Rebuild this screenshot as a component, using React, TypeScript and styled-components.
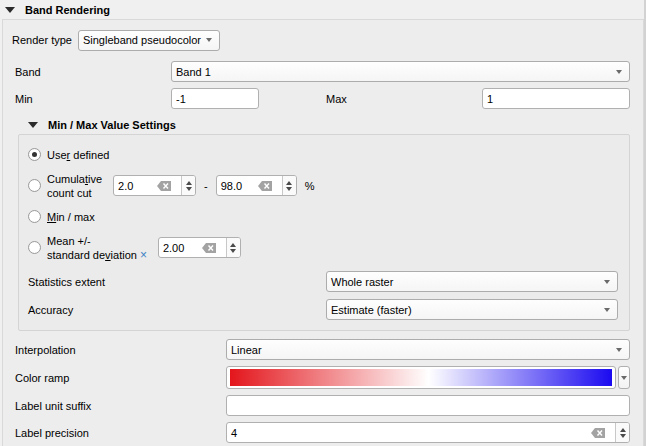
import React from 'react';
import styled, { createGlobalStyle } from 'styled-components';

const GlobalStyle = createGlobalStyle`
  html, body {
    margin: 0;
    padding: 0;
    background: #f0f0f0;
  }
  body {
    font-family: "Liberation Sans", Arial, sans-serif;
    font-size: 11px;
    color: #000;
  }
`;

const Page = styled.div`
  width: 646px;
  height: 446px;
  box-sizing: border-box;
  overflow: hidden;
  background: #f0f0f0;
  display: flex;
  flex-direction: column;
  border-right: 2px solid #d2d2d2;
`;

const SectionHeader = styled.div<{ $indent?: number; $height?: number; $top?: number }>`
  height: ${p => p.$height ?? 19}px;
  box-sizing: border-box;
  display: flex;
  align-items: center;
  gap: 10px;
  padding-left: ${p => p.$indent ?? 5}px;
  padding-top: ${p => p.$top ?? 0}px;
  font-weight: bold;
  flex-shrink: 0;
`;

const Caret = styled.span`
  width: 0;
  height: 0;
  border-left: 5px solid transparent;
  border-right: 5px solid transparent;
  border-top: 6px solid #2b2b2b;
`;

const Frame = styled.div`
  flex: 1;
  margin-left: 2px;
  border: 1px solid #d9d9d9;
  border-bottom: none;
  background: #ededed;
  padding: 9px 13px 0 9px;
  display: flex;
  flex-direction: column;
`;

const InlineRow = styled.div`
  display: flex;
  align-items: center;
  gap: 6px;
  height: 22px;
`;

const Grid = styled.div<{ $cols: string; $rowGap: number; $top: number; $left: number }>`
  display: grid;
  grid-template-columns: ${p => p.$cols};
  column-gap: 6px;
  row-gap: ${p => p.$rowGap}px;
  margin-top: ${p => p.$top}px;
  margin-left: ${p => p.$left}px;
  align-items: center;
`;

const Label = styled.span<{ $col?: number }>`
  ${p => (p.$col ? `grid-column: ${p.$col};` : '')}
  white-space: nowrap;
`;

const Combo = styled.div<{ $width?: number; $span?: string }>`
  ${p => (p.$span ? `grid-column: ${p.$span};` : '')}
  width: ${p => (p.$width ? `${p.$width}px` : 'auto')};
  height: 21px;
  box-sizing: border-box;
  border: 1px solid #acacac;
  border-radius: 3px;
  background: linear-gradient(#fefefe, #f5f5f5);
  display: flex;
  align-items: center;
  justify-content: space-between;
  padding: 0 7px 0 4px;
  white-space: nowrap;
`;

const Arrow = styled.span`
  width: 0;
  height: 0;
  border-left: 3.5px solid transparent;
  border-right: 3.5px solid transparent;
  border-top: 4px solid #6a6a6a;
`;

const LineEdit = styled.div<{ $col?: number }>`
  ${p => (p.$col ? `grid-column: ${p.$col};` : '')}
  height: 21px;
  box-sizing: border-box;
  border: 1px solid #b0b0b0;
  border-radius: 3px;
  background: #fff;
  display: flex;
  align-items: center;
  padding: 0 4px;
`;

const Spin = styled.div<{ $width?: number }>`
  width: ${p => (p.$width ? `${p.$width}px` : 'auto')};
  height: 21px;
  box-sizing: border-box;
  border: 1px solid #b0b0b0;
  border-radius: 3px;
  background: #fff;
  display: flex;
  align-items: stretch;
  flex-shrink: 0;
`;

const SpinValue = styled.span`
  flex: 1;
  display: flex;
  align-items: center;
  padding-left: 4px;
`;

const ClearSlot = styled.span`
  display: flex;
  align-items: center;
  margin-right: 10px;
`;

const SpinButtons = styled.span`
  width: 13px;
  border-left: 1px solid #c8c8c8;
  background: #fafafa;
  display: flex;
  flex-direction: column;
  align-items: center;
  justify-content: center;
  gap: 2px;
  border-radius: 0 2px 2px 0;
`;

const TriUp = styled.span`
  width: 0;
  height: 0;
  border-left: 3.5px solid transparent;
  border-right: 3.5px solid transparent;
  border-bottom: 4px solid #4a4a4a;
`;

const TriDown = styled(TriUp)`
  border-bottom: none;
  border-top: 4px solid #4a4a4a;
`;

const ClearIcon = () => (
  <svg width="14" height="10" viewBox="0 0 14 10">
    <path d="M4 0 H14 V10 H4 L0 5 Z" fill="#a3a3a3" />
    <path d="M6.5 2.5 L11 7.5 M11 2.5 L6.5 7.5" stroke="#fff" strokeWidth="1.4" />
  </svg>
);

const SpinBox: React.FC<{ value: string; width?: number }> = ({ value, width }) => (
  <Spin $width={width}>
    <SpinValue>{value}</SpinValue>
    <ClearSlot>
      <ClearIcon />
    </ClearSlot>
    <SpinButtons>
      <TriUp />
      <TriDown />
    </SpinButtons>
  </Spin>
);

const ComboBox: React.FC<{ text: string; width?: number; span?: string }> = ({ text, width, span }) => (
  <Combo $width={width} $span={span}>
    <span>{text}</span>
    <Arrow />
  </Combo>
);

const GroupBox = styled.div`
  margin: 0 0 0 6px;
  border: 1px solid #d4d4d4;
  border-radius: 2px;
  background: #ebebeb;
  padding: 9px 11px 10px 9px;
  display: flex;
  flex-direction: column;
  gap: 10px;
`;

const RadioRow = styled.div<{ $height?: number }>`
  display: flex;
  align-items: center;
  height: ${p => p.$height ?? 21}px;
`;

const Radio = styled.span<{ $checked?: boolean }>`
  width: 13px;
  height: 13px;
  box-sizing: border-box;
  border-radius: 50%;
  border: 1px solid #9a9a9a;
  background: radial-gradient(circle, #ffffff 55%, #f1f1f1);
  display: flex;
  align-items: center;
  justify-content: center;
  margin-right: 6px;
  flex-shrink: 0;
  &::after {
    content: '';
    display: ${p => (p.$checked ? 'block' : 'none')};
    width: 5px;
    height: 5px;
    border-radius: 50%;
    background: #333;
  }
`;

const RadioText = styled.span`
  line-height: 14px;
  margin-right: 11px;
`;

const Mark = styled.span`
  color: #3d80c4;
  font-size: 12px;
  margin-left: 3px;
`;

const Sep = styled.span`
  margin: 0 8px 0 8px;
`;

const RampWrap = styled.div`
  display: flex;
  gap: 2px;
  height: 23px;
`;

const Ramp = styled.div`
  flex: 1;
  box-sizing: border-box;
  border: 1px solid #b0b0b0;
  border-radius: 3px;
  background: #fff;
  padding: 2px 3px;
`;

const RampFill = styled.div`
  height: 100%;
  background: linear-gradient(to right, #e3161c 0%, #ffffff 52%, #1b0af0 100%);
`;

const RampButton = styled.div`
  width: 12px;
  box-sizing: border-box;
  border: 1px solid #b0b0b0;
  border-radius: 3px;
  background: linear-gradient(#fefefe, #f3f3f3);
  display: flex;
  align-items: center;
  justify-content: center;
`;

const App: React.FC = () => (
  <>
    <GlobalStyle />
    <Page>
      <SectionHeader>
        <Caret />
        <span>Band Rendering</span>
      </SectionHeader>
      <Frame>
        <InlineRow>
          <Label>Render type</Label>
          <ComboBox text="Singleband pseudocolor" width={142} />
        </InlineRow>

        <Grid $cols="150px 88px 1fr 150px 148px" $rowGap={6} $top={10} $left={3}>
          <Label>Band</Label>
          <ComboBox text="Band 1" span="2 / -1" />
          <Label>Min</Label>
          <LineEdit>-1</LineEdit>
          <Label $col={4}>Max</Label>
          <LineEdit>1</LineEdit>
        </Grid>

        <SectionHeader $indent={16} $height={25} $top={6}>
          <Caret />
          <span>Min / Max Value Settings</span>
        </SectionHeader>

        <GroupBox>
          <RadioRow>
            <Radio $checked />
            <RadioText>
              Use<u>r</u> defined
            </RadioText>
          </RadioRow>
          <RadioRow>
            <Radio />
            <RadioText>
              Cumula<u>t</u>ive
              <br />
              count cut
            </RadioText>
            <SpinBox value="2.0" width={83} />
            <Sep>-</Sep>
            <SpinBox value="98.0" width={81} />
            <Sep>%</Sep>
          </RadioRow>
          <RadioRow>
            <Radio />
            <RadioText>
              <u>M</u>in / max
            </RadioText>
          </RadioRow>
          <RadioRow>
            <Radio />
            <RadioText>
              Mean +/-
              <br />
              standard de<u>v</u>iation<Mark>×</Mark>
            </RadioText>
            <SpinBox value="2.00" width={83} />
          </RadioRow>
          <Grid $cols="292px 1fr" $rowGap={7} $top={3} $left={0}>
            <Label>Statistics extent</Label>
            <ComboBox text="Whole raster" />
            <Label>Accuracy</Label>
            <ComboBox text="Estimate (faster)" />
          </Grid>
        </GroupBox>

        <Grid $cols="205px 1fr" $rowGap={6} $top={8} $left={3}>
          <Label>Interpolation</Label>
          <ComboBox text="Linear" />
          <Label>Color ramp</Label>
          <RampWrap>
            <Ramp>
              <RampFill />
            </Ramp>
            <RampButton>
              <Arrow />
            </RampButton>
          </RampWrap>
          <Label>Label unit suffix</Label>
          <LineEdit />
          <Label>Label precision</Label>
          <SpinBox value="4" />
        </Grid>
      </Frame>
    </Page>
  </>
);

export default App;
